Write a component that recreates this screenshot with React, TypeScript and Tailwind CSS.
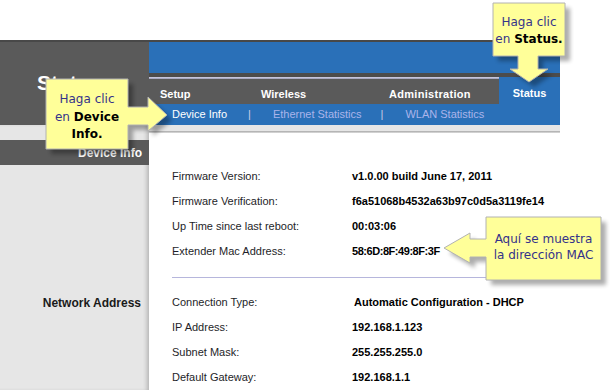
import React from "react";

const deviceRows = [
  ["Firmware Version:", "v1.0.00 build June 17, 2011"],
  ["Firmware Verification:", "f6a51068b4532a63b97c0d5a3119fe14"],
  ["Up Time since last reboot:", "00:03:06"],
  ["Extender Mac Address:", "58:6D:8F:49:8F:3F"],
];

const networkRows = [
  ["Connection Type:", "Automatic Configuration - DHCP"],
  ["IP Address:", "192.168.1.123"],
  ["Subnet Mask:", "255.255.255.0"],
  ["Default Gateway:", "192.168.1.1"],
];

// callout outlines, in page coordinates
const callouts = [
  "M46,79 H128 V107 H148 V97 L167,115 L148,131 V125 H128 V149 H46 Z",
  "M493,3 H565 V56 H538 V69 H548 L529,82 L510,69 H518 V56 H493 Z",
  "M486,217 H601 V280 H486 V257 H470 V263 L444,248 L470,233 V239 H486 Z",
];

function InfoRow({ label, value, extra }: { label: string; value: string; extra?: string }) {
  return (
    <div className="flex h-[25px] items-center">
      <div className="w-[180px] text-[11px] text-[#1e1e28]">{label}</div>
      <div className={`text-[11px] font-bold text-black ${extra ?? ""}`}>{value}</div>
    </div>
  );
}

export default function App() {
  return (
    <div
      className="relative h-[390px] w-[610px] overflow-hidden bg-white"
      style={{ fontFamily: '"Liberation Sans", Arial, sans-serif' }}
    >
      <div className="h-[40px]" />

      {/* Header */}
      <div className="flex w-[560px] border-t-2 border-[#484848]">
        <div className="h-[83px] w-[149px] bg-[#5a5a5a] pl-[37px] pt-[29px] text-[21px] leading-[24px] font-bold text-white">
          Status
        </div>
        <div className="flex flex-1 flex-col">
          <div className="h-[31px] bg-[#2a70b8]" />
          <div className="h-[4px] bg-[#4c4c4c]" />
          <div className="flex h-[27px]">
            <div className="flex flex-1 flex-col">
              <div className="h-[2px] bg-gradient-to-b from-[#d4d4e8] to-[#9a9ab4]" />
              <div className="flex flex-1 items-center bg-[#5a5a5a] pt-[5px] text-[11px] font-bold text-white">
                <span className="w-[112px] pl-[11px]">Setup</span>
                <span className="w-[128px]">Wireless</span>
                <span className="tracking-[0.3px]">Administration</span>
              </div>
            </div>
            <div className="flex w-[61px] items-center justify-center bg-[#2a70b8] pt-[5px] text-[11px] font-bold text-white">
              Status
            </div>
          </div>
          <div className="flex h-[21px] items-center bg-[#2a70b8] pl-[23px] text-[11px]">
            <span className="text-white">Device Info</span>
            <span className="ml-[21px] text-[#c9cde6]">|</span>
            <span className="ml-[22px] text-[#aab4ea]">Ethernet Statistics</span>
            <span className="ml-[19px] text-[#c9cde6]">|</span>
            <span className="ml-[22px] text-[#aab4ea]">WLAN Statistics</span>
          </div>
        </div>
      </div>

      {/* Body */}
      <div className="flex">
        <div className="flex h-[265px] w-[149px] flex-col bg-[#e6e6e6] shadow-[inset_-4px_0_4px_-2px_rgba(0,0,0,0.22)]">
          <div className="h-[15px]" />
          <div className="flex h-[25px] items-center justify-end bg-[#5a5a5a] pr-[7px] text-[12px] font-bold text-white">
            Device Info
          </div>
          <div className="mt-[125px] flex h-[25px] items-center justify-end pr-[8px] text-[12px] font-bold text-[#1a1a1a]">
            Network Address
          </div>
        </div>
        <div className="flex flex-1 flex-col">
          <div className="w-[411px]">
            <div className="h-[6px] bg-[#e6e6e6]" />
            <div className="h-[2px] bg-gradient-to-b from-[#a8a8a8] to-[#dedede]" />
          </div>
          <div className="pl-[23px] pt-[31px]">
            {deviceRows.map(([l, v], i) => (
              <InfoRow key={l} label={l} value={v} extra={i === 3 ? "tracking-[-0.45px]" : ""} />
            ))}
            <div className="mt-[13px] h-px w-[420px] bg-[#b6b6dc]" />
            <div className="mt-[12px]">
              {networkRows.map(([l, v], i) => (
                <InfoRow key={l} label={l} value={v} extra={i === 0 ? "pl-[2px]" : ""} />
              ))}
            </div>
          </div>
        </div>
      </div>

      {/* Callouts */}
      <svg className="pointer-events-none absolute left-0 top-0" width="610" height="390">
        <defs>
          <filter id="soft" x="-20%" y="-20%" width="140%" height="140%">
            <feGaussianBlur stdDeviation="2" />
          </filter>
        </defs>
        {callouts.map((d) => (
          <g key={d}>
            <path d={d} transform="translate(5,5)" fill="#000" opacity="0.32" filter="url(#soft)" />
            <path d={d} fill="#ffff99" stroke="#b2b2b2" strokeWidth="1" />
          </g>
        ))}
      </svg>

      <div
        className="absolute left-[46px] top-[91px] w-[82px] text-center text-[12px] leading-[17.5px] whitespace-nowrap text-[#35338a]"
        style={{ fontFamily: '"DejaVu Sans", Verdana, sans-serif' }}
      >
        <div>Haga clic</div>
        <div>
          en <b className="text-black">Device</b>
        </div>
        <div>
          <b className="text-black">Info.</b>
        </div>
      </div>

      <div
        className="absolute left-[493px] top-[14px] w-[72px] text-center text-[12px] leading-[16.5px] whitespace-nowrap text-[#35338a]"
        style={{ fontFamily: '"DejaVu Sans", Verdana, sans-serif' }}
      >
        <div>Haga clic</div>
        <div>
          en <b className="text-black">Status.</b>
        </div>
      </div>

      <div
        className="absolute left-[486px] top-[231px] w-[115px] text-center text-[12px] leading-[16px] whitespace-nowrap text-[#35338a]"
        style={{ fontFamily: '"DejaVu Sans", Verdana, sans-serif' }}
      >
        <div>Aquí se muestra</div>
        <div>la dirección MAC</div>
      </div>
    </div>
  );
}
